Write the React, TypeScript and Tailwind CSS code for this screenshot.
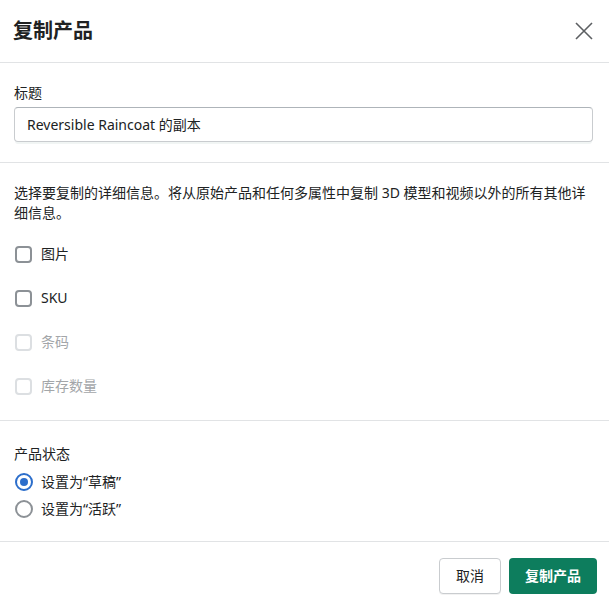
import React, { useState } from 'react';

const font = { fontFamily: '"Noto Sans", "Noto Sans CJK SC", sans-serif' };

function Checkbox({ label, disabled = false }: { label: string; disabled?: boolean }) {
  return (
    <label className="flex h-5 items-center">
      <span
        className={`ml-px h-[17px] w-[17px] rounded-[4px] border-2 bg-white ${
          disabled ? 'border-[#dcdfe2]' : 'border-[#8c9196]'
        }`}
      />
      <span className={`ml-[9px] text-sm ${disabled ? 'text-[#a3a6a9]' : 'text-[#202223]'}`}>{label}</span>
    </label>
  );
}

function Radio({ label, checked, onClick }: { label: string; checked: boolean; onClick: () => void }) {
  return (
    <label className="flex h-5 cursor-pointer items-center" onClick={onClick}>
      <span
        className={`ml-px flex h-[18px] w-[18px] items-center justify-center rounded-full border-2 ${
          checked ? 'border-[#2c6ecb]' : 'border-[#8c9196]'
        }`}
      >
        {checked && <span className="h-2 w-2 rounded-full bg-[#2c6ecb]" />}
      </span>
      <span className="ml-[8px] text-sm text-[#202223]">{label}</span>
    </label>
  );
}

export default function App() {
  const [status, setStatus] = useState<'draft' | 'active'>('draft');

  return (
    <div className="h-[606px] w-[609px] bg-white text-[#202223]" style={font}>
      {/* Header */}
      <div className="flex h-[63px] items-center justify-between border-b border-[#e1e3e5] pl-[13px] pr-4">
        <h1 className="text-xl font-bold leading-none">复制产品</h1>
        <button className="text-[#5c5f62]">
          <svg width="18" height="18" viewBox="0 0 18 18" fill="none" stroke="currentColor" strokeWidth="1.6">
            <path d="M1 1L17 17M17 1L1 17" />
          </svg>
        </button>
      </div>

      {/* Title field */}
      <div className="border-b border-[#e1e3e5] pl-[14px] pr-4 pb-5 pt-5">
        <div className="h-5 text-sm leading-5">标题</div>
        <div className="mt-1 flex h-[35px] items-center rounded-[4px] border border-[#c9cccf] border-t-[#aeb4b9] px-3 text-sm shadow-[0_3px_0_-1px_#f1f5f4]">
          Reversible Raincoat 的副本
        </div>
      </div>

      {/* Details */}
      <div className="border-b border-[#e1e3e5] pl-[14px] pr-4 pt-5 pb-6">
        <p className="text-sm leading-5">
          选择要复制的详细信息。将从原始产品和任何多属性中复制 3D 模型和视频以外的所有其他详细信息。
        </p>
        <div className="mt-[21px] flex flex-col gap-6">
          <Checkbox label="图片" />
          <Checkbox label="SKU" />
          <Checkbox label="条码" disabled />
          <Checkbox label="库存数量" disabled />
        </div>
      </div>

      {/* Status */}
      <div className="border-b border-[#e1e3e5] pl-[14px] pr-4 pt-[23px] pb-[22px]">
        <div className="h-5 text-sm leading-5">产品状态</div>
        <div className="mt-2 flex flex-col gap-[7px]">
          <Radio label="设置为“草稿”" checked={status === 'draft'} onClick={() => setStatus('draft')} />
          <Radio label="设置为“活跃”" checked={status === 'active'} onClick={() => setStatus('active')} />
        </div>
      </div>

      {/* Footer */}
      <div className="flex justify-end gap-2 pr-3 pt-4">
        <button className="h-9 rounded-[4px] border border-[#c9cccf] bg-white px-4 text-sm shadow-[0_1px_0_rgba(0,0,0,0.05)]">
          取消
        </button>
        <button className="h-9 rounded-[4px] bg-[#0d7d5d] px-4 text-sm font-semibold text-white">
          复制产品
        </button>
      </div>
    </div>
  );
}
